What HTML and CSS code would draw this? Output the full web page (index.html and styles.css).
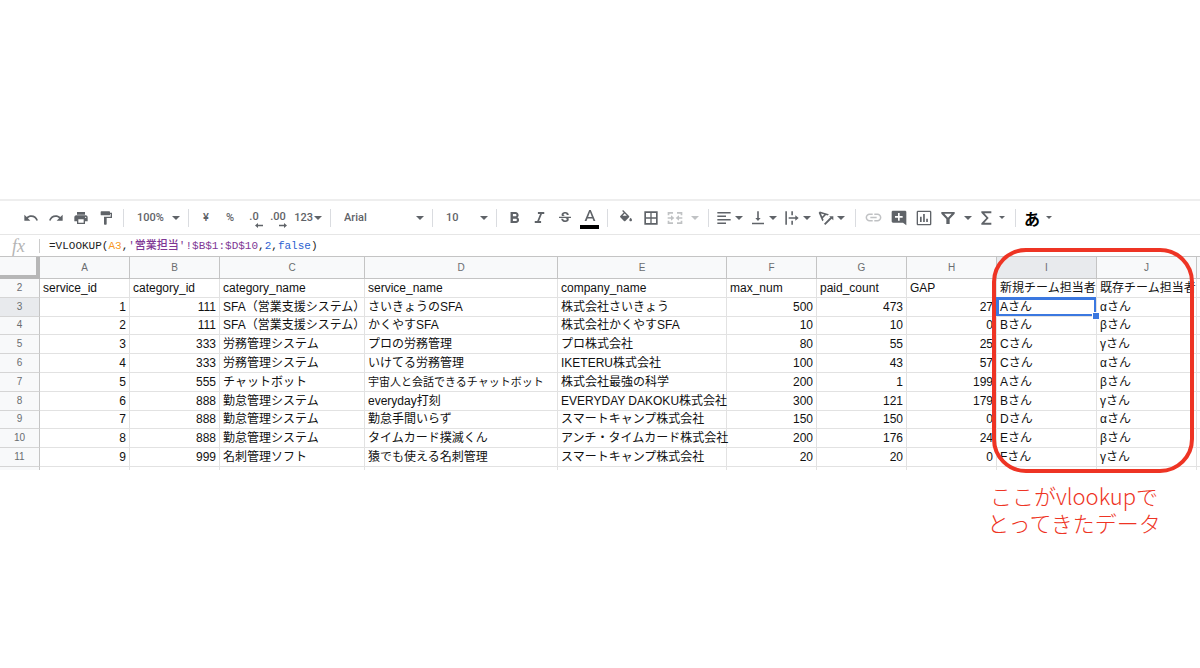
FILE: index.html
```html
<!DOCTYPE html>
<html lang="ja">

<head>
    <meta charset="utf-8">
    <meta name="viewport" content="width=device-width, initial-scale=1.0">
    <title>VLOOKUP</title>
    <link rel="stylesheet" href="styles.css">
</head>

<body>
    <main>
        <div class="toolbar" role="toolbar">
            <button class="tool" aria-label="元に戻す"><svg viewBox="0 0 24 24"><path d="M12.5 8c-2.65 0-5.05.99-6.9 2.6L2 7v9h9l-3.62-3.62c1.39-1.16 3.16-1.88 5.12-1.88 3.54 0 6.55 2.31 7.6 5.5l2.37-.78C21.08 11.03 17.15 8 12.5 8z"/></svg></button>
            <button class="tool" aria-label="やり直し"><svg viewBox="0 0 24 24"><path d="M18.4 10.6C16.55 8.99 14.15 8 11.5 8c-4.65 0-8.58 3.03-9.96 7.22L3.9 16c1.05-3.19 4.05-5.5 7.6-5.5 1.95 0 3.73.72 5.12 1.88L13 16h9V7l-3.6 3.6z"/></svg></button>
            <button class="tool" aria-label="印刷"><svg viewBox="0 0 24 24"><path d="M19 8H5c-1.66 0-3 1.34-3 3v6h4v4h12v-4h4v-6c0-1.66-1.34-3-3-3zm-3 11H8v-5h8v5zm3-7c-.55 0-1-.45-1-1s.45-1 1-1 1 .45 1 1-.45 1-1 1zm-1-9H6v4h12V3z"/></svg></button>
            <button class="tool" aria-label="書式を貼り付け"><svg viewBox="0 0 24 24"><path d="M18 4V3c0-.55-.45-1-1-1H5c-.55 0-1 .45-1 1v4c0 .55.45 1 1 1h12c.55 0 1-.45 1-1V6h1v4H9v11c0 .55.45 1 1 1h2c.55 0 1-.45 1-1v-9h8V4h-3z"/></svg></button>
            <span class="sep"></span>
            <span class="picker picker-zoom"><select aria-label="ズーム"><option>100%</option></select></span>
            <span class="sep"></span>
            <button class="tool tool-format">¥</button>
            <button class="tool tool-format">%</button>
            <button class="tool tool-format decimal">.0<svg viewBox="0 0 8 5"><path d="M3 0L0 2.5 3 5V3.2h5V1.8H3z"/></svg></button>
            <button class="tool tool-format decimal">.00<svg viewBox="0 0 8 5"><path d="M5 0l3 2.5L5 5V3.2H0V1.8h5z"/></svg></button>
            <button class="tool tool-number">123<i class="arrow"></i></button>
            <span class="sep"></span>
            <span class="picker picker-font"><select aria-label="フォント"><option>Arial</option></select></span>
            <span class="sep"></span>
            <span class="picker picker-size"><select aria-label="フォントサイズ"><option>10</option></select></span>
            <span class="sep"></span>
            <button class="tool" aria-label="太字"><svg class="big" viewBox="0 0 24 24"><path d="M15.6 11.8c.97-.67 1.65-1.77 1.65-2.8 0-2.26-1.75-4-4-4H7v14h7.04c2.09 0 3.71-1.7 3.71-3.79 0-1.52-.86-2.82-2.15-3.41zM10 7.5h3c.83 0 1.5.67 1.5 1.5s-.67 1.5-1.5 1.5h-3v-3zm3.5 9H10v-3h3.5c.83 0 1.5.67 1.5 1.5s-.67 1.5-1.5 1.5z"/></svg></button>
            <button class="tool" aria-label="斜体"><svg class="big" viewBox="0 0 24 24"><path d="M10 5v2.5h2.7l-3.6 9H6V19h8v-2.5h-2.5l3.6-9H18V5z"/></svg></button>
            <button class="tool" aria-label="取り消し線"><svg viewBox="0 0 24 24"><path d="M7.24 8.75c-.26-.48-.39-1.03-.39-1.67 0-.61.13-1.16.4-1.67.26-.5.63-.93 1.11-1.29.48-.35 1.05-.63 1.7-.83.66-.19 1.39-.29 2.18-.29.81 0 1.54.11 2.21.34.66.22 1.23.54 1.69.94.47.4.83.88 1.08 1.43s.38 1.15.38 1.81h-3.01c0-.31-.05-.59-.15-.85-.09-.27-.24-.49-.44-.68-.2-.19-.45-.33-.75-.44-.3-.1-.66-.16-1.06-.16-.39 0-.74.04-1.03.13s-.53.21-.72.36c-.19.16-.34.34-.44.55-.1.21-.15.43-.15.66 0 .48.25.88.74 1.21.38.25.77.48 1.41.7H7.39c-.05-.08-.11-.17-.15-.25zM21 12v-2H3v2h9.62c.18.07.4.14.55.2.37.17.66.34.87.51s.35.36.43.57c.07.2.11.43.11.69 0 .23-.05.45-.14.66-.09.2-.23.38-.42.53-.19.15-.42.26-.71.35-.29.08-.63.13-1.01.13-.43 0-.83-.04-1.18-.13s-.66-.23-.91-.42c-.25-.19-.45-.44-.59-.75s-.25-.76-.25-1.21H6.4c0 .55.08 1.13.24 1.58s.37.85.65 1.21c.28.35.6.66.98.92.37.26.78.48 1.22.65.44.17.9.3 1.38.39.48.08.96.13 1.44.13.8 0 1.53-.09 2.18-.28s1.21-.45 1.67-.79c.46-.34.82-.77 1.07-1.27s.38-1.07.38-1.71c0-.6-.1-1.14-.31-1.61-.05-.11-.11-.23-.17-.33H21z"/></svg></button>
            <button class="tool" aria-label="テキストの色"><svg class="tall" viewBox="0 0 20 20"><path d="M9.2 2L4.6 13h1.9l1-2.6h5l1 2.600h1.900L10.800 2zM8.100 8.900L10 4l1.900 4.900z"/><path fill="#000" d="M0 17h19v4H0z"/></svg></button>
            <span class="sep"></span>
            <button class="tool" aria-label="塗りつぶしの色"><svg viewBox="0 0 24 24"><path d="M16.56 8.94L7.62 0 6.21 1.41l2.38 2.38-5.15 5.15c-.59.59-.59 1.54 0 2.12l5.5 5.5c.29.29.68.44 1.06.44s.77-.15 1.06-.44l5.5-5.5c.59-.58.59-1.53 0-2.12zM6.8 8.500L10 5.21l3.300 3.290zM19 11.5s-2 2.17-2 3.5c0 1.1.9 2 2 2s2-.9 2-2c0-1.33-2-3.5-2-3.5z"/></svg></button>
            <button class="tool" aria-label="枠線"><svg viewBox="0 0 24 24"><path d="M2 2v20h20V2H2zm9 17.500H4.500V13H11v6.500zm0-8.500H4.500V4.500H11V11zm8.500 8.500H13V13h6.500v6.500zm0-8.500H13V4.500h6.500V11z"/></svg></button>
            <button class="tool tool-wide disabled" aria-label="セルを結合" disabled><svg viewBox="0 0 24 24"><path d="M1 3h8v2.500H3.500V8H1zM23 3h-8v2.500h5.500V8H23zM1 21h8v-2.500H3.500V16H1zM23 21h-8v-2.500h5.500V16H23zM1 11h5V8l5 4-5 4v-3H1zM23 11h-5V8l-5 4 5 4v-3h5z"/></svg><i class="arrow"></i></button>
            <span class="sep"></span>
            <button class="tool tool-menu" aria-label="水平方向の配置"><svg viewBox="0 0 24 24"><path d="M2 3h20v2.400H2zM2 8.200h13v2.400H2zM2 13.400h20v2.400H2zM2 18.600h13V21H2z"/></svg><i class="arrow"></i></button>
            <button class="tool tool-menu" aria-label="垂直方向の配置"><svg viewBox="0 0 24 24"><path d="M16 12h-2.800V2h-2.400v10H8l4 4.500zM3 19v2.400h18V19z"/></svg><i class="arrow"></i></button>
            <button class="tool tool-menu" aria-label="テキストを折り返す"><svg viewBox="0 0 24 24"><path d="M2 2h2.400v20H2zM11 2h2.400v6H11zM11 16h2.400v6H11zM7 11h10V8l5 4-5 4v-3H7z"/></svg><i class="arrow"></i></button>
            <button class="tool tool-menu" aria-label="テキストの回転"><svg viewBox="0 0 24 24"><path d="M1 4l5.500 13 2-2-1.300-2.800 4.800-4.800 2.500.9 1.800-1.800L2.800 2.200zM4.400 5.300l5.200 1.300-3.300 3.300zM9 20.500l9.500-9.500L16.700 9.200H23v6.300l-2.500-2.500L11 22.500z"/></svg><i class="arrow"></i></button>
            <span class="sep"></span>
            <button class="tool disabled" aria-label="リンクを挿入" disabled><svg class="big" viewBox="0 0 24 24"><path d="M3.900 12c0-1.710 1.390-3.100 3.100-3.100h4V7H7c-2.760 0-5 2.240-5 5s2.240 5 5 5h4v-1.900H7c-1.710 0-3.100-1.390-3.100-3.100zM8 13h8v-2H8v2zm9-6h-4v1.900h4c1.710 0 3.100 1.390 3.100 3.100s-1.390 3.100-3.100 3.100h-4V17h4c2.760 0 5-2.240 5-5s-2.240-5-5-5z"/></svg></button>
            <button class="tool" aria-label="コメントを挿入"><svg viewBox="0 0 24 24"><path d="M23 3c0-1.100-.9-2-2-2H3c-1.100 0-2 .9-2 2v14c0 1.100.9 2 2 2h15l5 4zM17.500 11.500H13V16h-2.500v-4.500H6V9h4.500V4.500H13V9h4.500z"/></svg></button>
            <button class="tool" aria-label="グラフを挿入"><svg viewBox="0 0 24 24"><path d="M8.500 18H6v-8h2.500v8zm4.700 0h-2.500V6h2.500v12zm4.600 0h-2.500v-5h2.500v5zM21 3v18H3V3h18zm0-2H3c-1.100 0-2 .9-2 2v18c0 1.100.9 2 2 2h18c1.100 0 2-.9 2-2V3c0-1.100-.9-2-2-2z"/></svg></button>
            <button class="tool tool-wide" aria-label="フィルタ"><svg viewBox="0 0 24 24"><path d="M2 3v2.500l7.500 8V21h5v-7.500l7.500-8V3zM6.500 5.500h11L12 11.500z"/></svg><i class="arrow"></i></button>
            <button class="tool tool-menu" aria-label="関数"><svg viewBox="0 0 24 24"><path d="M20 2H5v2.300l7.500 7.700L5 19.700V22h15v-3H9.500l6.500-7-6.500-7H20z"/></svg><i class="arrow small"></i></button>
            <span class="sep"></span>
            <button class="tool tool-menu ime">あ<i class="arrow small"></i></button>
        </div>

        <div class="formula-bar">
            <span class="fx">fx</span>
            <div class="formula" role="textbox" aria-label="数式" contenteditable="true" spellcheck="false">=VLOOKUP(<span class="ref">A3</span>,<span class="range">'<b>営業担当</b>'!$B$1:$D$10</span>,<span class="literal">2</span>,<span class="literal">false</span>)</div>
        </div>

        <div class="sheet">
            <table>
                <colgroup>
                    <col class="col-row">
                    <col class="col-m">
                    <col class="col-m">
                    <col class="col-category">
                    <col class="col-service">
                    <col class="col-company">
                    <col class="col-m">
                    <col class="col-m">
                    <col class="col-m">
                    <col class="col-l">
                    <col class="col-l">
                    <col>
                </colgroup>
                <thead>
                    <tr><th class="corner"></th><th>A</th><th>B</th><th>C</th><th>D</th><th>E</th><th>F</th><th>G</th><th>H</th><th class="active">I</th><th>J</th><th></th></tr>
                </thead>
                <tbody>
                    <tr><th>2</th><td>service_id</td><td>category_id</td><td>category_name</td><td>service_name</td><td>company_name</td><td>max_num</td><td>paid_count</td><td>GAP</td><td>新規チーム担当者</td><td>既存チーム担当者</td><td></td></tr>
                    <tr><th class="active">3</th><td class="num">1</td><td class="num">111</td><td>SFA（営業支援システム）</td><td>さいきょうのSFA</td><td>株式会社さいきょう</td><td class="num">500</td><td class="num">473</td><td class="num">27</td><td class="selected">Aさん</td><td>αさん</td><td></td></tr>
                    <tr><th>4</th><td class="num">2</td><td class="num">111</td><td>SFA（営業支援システム）</td><td>かくやすSFA</td><td>株式会社かくやすSFA</td><td class="num">10</td><td class="num">10</td><td class="num">0</td><td>Bさん</td><td>βさん</td><td></td></tr>
                    <tr><th>5</th><td class="num">3</td><td class="num">333</td><td>労務管理システム</td><td>プロの労務管理</td><td>プロ株式会社</td><td class="num">80</td><td class="num">55</td><td class="num">25</td><td>Cさん</td><td>γさん</td><td></td></tr>
                    <tr><th>6</th><td class="num">4</td><td class="num">333</td><td>労務管理システム</td><td>いけてる労務管理</td><td>IKETERU株式会社</td><td class="num">100</td><td class="num">43</td><td class="num">57</td><td>Cさん</td><td>αさん</td><td></td></tr>
                    <tr><th>7</th><td class="num">5</td><td class="num">555</td><td>チャットボット</td><td class="dense">宇宙人と会話できるチャットボット</td><td>株式会社最強の科学</td><td class="num">200</td><td class="num">1</td><td class="num">199</td><td>Aさん</td><td>βさん</td><td></td></tr>
                    <tr><th>8</th><td class="num">6</td><td class="num">888</td><td>勤怠管理システム</td><td>everyday打刻</td><td>EVERYDAY DAKOKU株式会社</td><td class="num">300</td><td class="num">121</td><td class="num">179</td><td>Bさん</td><td>γさん</td><td></td></tr>
                    <tr><th>9</th><td class="num">7</td><td class="num">888</td><td>勤怠管理システム</td><td>勤怠手間いらず</td><td>スマートキャンプ株式会社</td><td class="num">150</td><td class="num">150</td><td class="num">0</td><td>Dさん</td><td>αさん</td><td></td></tr>
                    <tr><th>10</th><td class="num">8</td><td class="num">888</td><td>勤怠管理システム</td><td>タイムカード撲滅くん</td><td>アンチ・タイムカード株式会社</td><td class="num">200</td><td class="num">176</td><td class="num">24</td><td>Eさん</td><td>βさん</td><td></td></tr>
                    <tr><th>11</th><td class="num">9</td><td class="num">999</td><td>名刺管理ソフト</td><td>猿でも使える名刺管理</td><td>スマートキャンプ株式会社</td><td class="num">20</td><td class="num">20</td><td class="num">0</td><td>Fさん</td><td>γさん</td><td></td></tr>
                </tbody>
                <tfoot>
                    <tr><th></th><td></td><td></td><td></td><td></td><td></td><td></td><td></td><td></td><td></td><td></td><td></td></tr>
                </tfoot>
            </table>

            <!-- marks the two looked-up columns -->
            <div class="callout">
                <div class="callout-frame"></div>
                <p>ここがvlookupで</p>
                <p>とってきたデータ</p>
            </div>
        </div>
    </main>
</body>

</html>
```
FILE: styles.css
```css
:root {
    --icon: #5f6368;
    --head: #f8f9fa;
    --head-active: #e8eaed;
    --head-line: #c4c4c4;
    --line: #e2e2e2;
    --select: #3b78e0;
    --red: #ee3424;
}

* {
    box-sizing: border-box;
}

body {
    margin: 0;
    background: #fff;
    color: #111;
    font-family: "Liberation Sans", "Noto Sans CJK JP", sans-serif;
    font-size: 12px;
}

main {
    min-height: 100vh;
    padding-top: 199px;
}

/* toolbar */
.toolbar {
    display: flex;
    align-items: center;
    height: 36px;
    padding-left: 18px;
    border-top: 2px solid #eee;
    border-bottom: 1px solid #e6e6e6;
}

.tool {
    display: flex;
    flex: none;
    align-items: center;
    justify-content: center;
    width: 25px;
    height: 26px;
    padding: 0;
    border: 0;
    background: none;
    color: var(--icon);
    font-family: Roboto, "Noto Sans CJK JP", sans-serif;
    font-size: 11px;
    font-weight: 500;
}

.tool svg {
    flex: none;
    width: 16px;
    height: 16px;
    fill: currentColor;
}

.tool svg.big {
    width: 19px;
    height: 19px;
}

.tool svg.tall {
    width: 20px;
    height: 20px;
    overflow: visible;
}

.tool-format {
    width: 24px;
}

.decimal {
    flex-direction: column;
    align-items: center;
    line-height: 12px;
    padding-top: 4px;
}

.tool.decimal svg {
    align-self: flex-end;
    width: 8px;
    height: 5px;
    margin-right: 3px;
}

.tool-number {
    justify-content: flex-end;
    width: 35px;
    gap: 1px;
    padding-right: 3px;
}

.tool-menu,
.tool-wide {
    justify-content: space-between;
    width: 34px;
    padding: 0 5px 0 2px;
}

.tool-wide {
    width: 40px;
    padding: 0 4px;
}

.disabled {
    color: #c0c2c4;
}

.ime {
    width: 36px;
    color: #000;
    font-size: 16px;
    font-weight: 700;
    padding-left: 3px;
}

.sep {
    flex: none;
    width: 1px;
    height: 18px;
    margin: 0 5px;
    background: #dadce0;
}

.arrow,
.picker::after {
    width: 0;
    border: 4px solid transparent;
    border-top-color: var(--icon);
    border-bottom: 0;
}

.disabled .arrow {
    border-top-color: #c0c2c4;
}

.arrow.small {
    border-width: 3px 3px 0;
}

.picker {
    display: grid;
    flex: none;
    align-items: center;
}

.picker::after {
    content: "";
    grid-area: 1 / 1;
    justify-self: end;
    margin-right: 3px;
    pointer-events: none;
}

.picker select {
    grid-area: 1 / 1;
    width: 100%;
    height: 26px;
    padding: 0 0 0 8px;
    border: 0;
    appearance: none;
    background: none;
    color: var(--icon);
    font-family: Roboto, sans-serif;
    font-size: 11px;
    font-weight: 500;
}

.picker-zoom {
    width: 54px;
}

.picker-size {
    width: 53px;
}

.picker-font {
    width: 91px;
}

/* formula bar */
.formula-bar {
    display: flex;
    align-items: center;
    height: 21px;
}

.fx {
    width: 40px;
    padding-left: 12px;
    border-right: 1px solid #ccc;
    color: #b4b4b4;
    font-family: "Liberation Serif", serif;
    font-size: 18px;
    font-style: italic;
    line-height: 14px;
}

.formula {
    padding-left: 9px;
    color: #222;
    font-family: "Liberation Mono", "Noto Sans CJK JP", monospace;
    font-size: 11px;
    line-height: 20px;
    white-space: nowrap;
}

.formula b {
    font-weight: 500;
}

.ref {
    color: #f7981d;
}

.range {
    color: #7e3794;
}

.literal {
    color: #2b62d0;
}

/* grid */
.sheet {
    position: relative;
}

table {
    width: 100%;
    height: 214px;
    table-layout: fixed;
    border-spacing: 0;
    border-top: 1px solid var(--head-line);
}

.col-row {
    width: 40px;
}

.col-m {
    width: 90px;
}

.col-category {
    width: 145px;
}

.col-service {
    width: 193px;
}

.col-company {
    width: 169px;
}

.col-l {
    width: 100px;
}

th,
td {
    padding: 0;
    line-height: 16px;
    white-space: nowrap;
    border-right: 1px solid var(--line);
    border-bottom: 1px solid var(--line);
}

td {
    padding: 0 3px;
}

th {
    background: var(--head);
    border-color: var(--head-line);
    color: #6a6d70;
    font-size: 10px;
    font-weight: 400;
}

thead th {
    height: 22px;
}

tbody th {
    border-bottom-color: #d5d5d5;
}

th:last-child,
td:last-child {
    border-right: 0;
    padding: 0;
}

.corner {
    border-right: 4px solid #b7b7b7;
    border-bottom: 4px solid #b7b7b7;
}

th.active {
    background: var(--head-active);
}

.num {
    text-align: right;
}

.dense {
    font-size: 11px;
}

.selected {
    position: relative;
    box-shadow: inset 0 0 0 2px var(--select), -1px -1px 0 var(--select);
}

.selected::after {
    content: "";
    position: absolute;
    right: -3px;
    bottom: -3px;
    width: 6px;
    height: 6px;
    background: var(--select);
    box-shadow: 0 0 0 1px #fff;
}

tfoot th,
tfoot td {
    height: 3px;
    line-height: 0;
    border-bottom: 0;
}

/* callout */
.callout {
    position: absolute;
    top: -8px;
    left: 992px;
    width: 202px;
}

.callout-frame {
    height: 225px;
    margin-bottom: 9px;
    border: 4px solid var(--red);
    border-radius: 34px;
}

.callout p {
    margin: 0;
    padding-right: 38px;
    color: var(--red);
    font-family: "Noto Sans CJK JP", sans-serif;
    font-size: 22px;
    font-weight: 300;
    line-height: 27px;
    white-space: nowrap;
    display: flex;
    justify-content: center;
}
```
